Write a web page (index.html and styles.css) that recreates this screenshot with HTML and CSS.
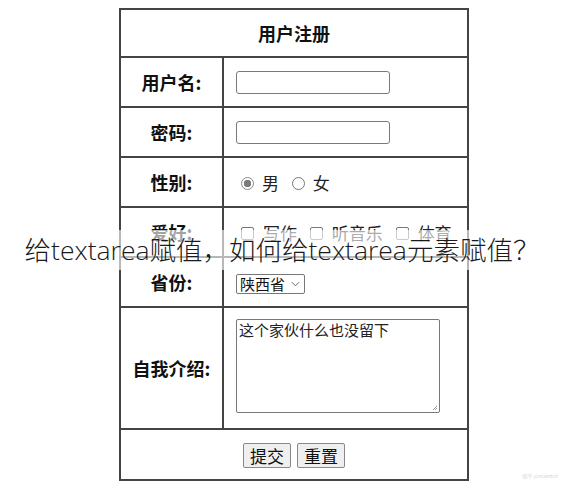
FILE: index.html
```html
<!DOCTYPE html>
<html lang="zh-CN">
<head>
<meta charset="utf-8">
<title>用户注册</title>
<link rel="stylesheet" href="styles.css">
</head>
<body>
<table class="reg">
  <tr class="row-head"><th colspan="2" class="title">用户注册</th></tr>
  <tr class="row"><td class="label">用户名:</td><td class="field"><input class="text" type="text"></td></tr>
  <tr class="row"><td class="label">密码:</td><td class="field"><input class="text" type="password"></td></tr>
  <tr class="row"><td class="label">性别:</td><td class="field">
    <span class="opt"><span class="radio checked"></span>男</span>
    <span class="opt"><span class="radio"></span>女</span>
  </td></tr>
  <tr class="row"><td class="label">爱好:</td><td class="field">
    <span class="opt"><span class="check"></span>写作</span>
    <span class="opt"><span class="check"></span>听音乐</span>
    <span class="opt"><span class="check"></span>体育</span>
  </td></tr>
  <tr class="row"><td class="label">省份:</td><td class="field">
    <span class="select">陕西省<svg class="chev" viewBox="0 0 10 6" width="9" height="6"><path d="M1 1 L5 5 L9 1" fill="none" stroke="#555" stroke-width="1"/></svg></span>
  </td></tr>
  <tr class="row-intro"><td class="label">自我介绍:</td><td class="field">
    <div class="area">这个家伙什么也没留下<svg class="grip" viewBox="0 0 6 6" width="6" height="6"><path d="M5 1 L1 5 M5 3 L3 5" stroke="#999" stroke-width="1"/></svg></div>
  </td></tr>
  <tr class="row-btn"><td colspan="2" class="btns"><span class="btn">提交</span><span class="btn">重置</span></td></tr>
</table>
<div class="overlay">给textarea赋值，如何给textarea元素赋值？</div>
<div class="mark">知乎 @resketch</div>
</body>
</html>
```

FILE: styles.css
```css
html, body {
  margin: 0;
  padding: 0;
  background: #fff;
}
body {
  font-family: "Noto Sans CJK SC", "Liberation Sans", sans-serif;
  color: #111;
  width: 564px;
  height: 490px;
  position: relative;
  overflow: hidden;
}
.reg {
  border-collapse: collapse;
  width: 350px;
  margin: 8px 0 0 119px;
  border: 2px solid #444;
}
.reg th, .reg td {
  border: 2px solid #444;
  padding: 0;
}
.title {
  height: 46px;
  font-size: 18px;
  font-weight: bold;
  text-align: center;
}
.row td { height: 48px; }
.row-intro td { height: 120px; }
.row-btn td { height: 47px; }
.label {
  width: 101px;
  text-align: center;
  font-size: 18px;
  font-weight: bold;
}
.field {
  padding-left: 12px !important;
  font-size: 17px;
  color: #222;
}
.text {
  display: block;
  box-sizing: border-box;
  width: 154px;
  height: 23px;
  border: 1px solid #7a7a7a;
  border-radius: 3px;
  margin: 0;
  padding: 0;
  background: #fff;
}
.opt {
  display: inline-flex;
  align-items: center;
  margin-right: 4px;
  line-height: 20px;
}
.radio {
  display: inline-block;
  box-sizing: border-box;
  width: 13px;
  height: 13px;
  border: 1px solid #777;
  border-radius: 50%;
  margin: 0 8px 0 5px;
  background: #fff;
}
.radio.checked {
  border-color: #888;
  background: radial-gradient(circle, #7c7c7c 0 3.5px, #fff 4px);
}
.check {
  display: inline-block;
  box-sizing: border-box;
  width: 13px;
  height: 13px;
  border: 1px solid #777;
  border-radius: 2px;
  margin: 0 9px 0 5px;
  background: #fff;
}
.select {
  display: inline-flex;
  align-items: center;
  gap: 6px;
  box-sizing: border-box;
  height: 20px;
  padding: 0 4px 0 3px;
  border: 1px solid #777;
  border-radius: 2px;
  font-size: 15px;
  line-height: 18px;
  color: #111;
  margin-top: 3px;
}
.chev { display: block; }
.area {
  position: relative;
  box-sizing: border-box;
  width: 204px;
  height: 94px;
  border: 1px solid #777;
  border-radius: 2px;
  padding: 1px 2px;
  font-size: 15px;
  line-height: 18px;
  color: #222;
  margin-bottom: 4px;
}
.grip {
  position: absolute;
  right: 1px;
  bottom: 1px;
}
.btns {
  text-align: center;
  font-size: 0;
  padding-top: 2px !important;
}
.btn {
  display: inline-block;
  box-sizing: border-box;
  width: 48px;
  height: 25px;
  margin: 0 3px;
  border: 1px solid #888;
  border-radius: 2px;
  background: #efefef;
  font-size: 17px;
  line-height: 23px;
  text-align: center;
  color: #111;
}
.overlay {
  position: absolute;
  left: 0;
  top: 230px;
  width: 564px;
  height: 40px;
  background: rgba(255, 255, 255, 0.62);
  font-family: "Open Sans", "Noto Sans CJK SC", sans-serif;
  font-size: 26.5px;
  line-height: 40px;
  text-align: center;
  color: #1a1a1a;
  font-weight: 300;
  white-space: nowrap;
}
.mark {
  position: absolute;
  right: 6px;
  bottom: 11px;
  font-size: 5px;
  color: #d6d6d6;
}
```
